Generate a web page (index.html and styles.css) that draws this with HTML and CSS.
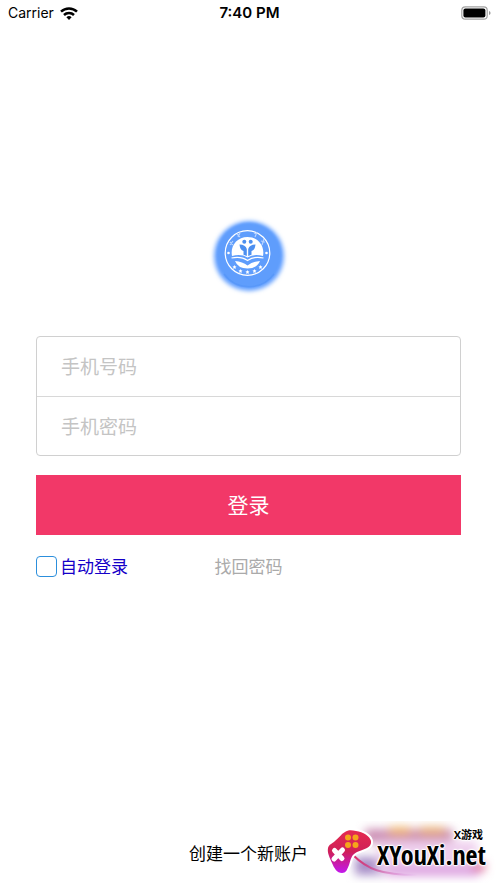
FILE: index.html
```
<!DOCTYPE html>
<html lang="zh-CN">
<head>
    <meta charset="UTF-8">
    <meta name="viewport" content="width=device-width, initial-scale=1.0">
    <title>登录</title>
    <link rel="stylesheet" href="styles.css">
</head>
<body>
    <header class="status-bar">
        <div class="carrier">
            <span>Carrier</span>
            <svg width="18" height="13" viewBox="0 0 18 13" fill="none" stroke="#000" stroke-width="2.5" aria-hidden="true">
                <path d="M1 4.7a11.5 11.5 0 0 1 16 0"/>
                <path d="M4 8a7.2 7.2 0 0 1 10 0"/>
                <path d="M9 13 6.4 10.3a3.8 3.8 0 0 1 5.2 0z" fill="#000" stroke="none"/>
            </svg>
        </div>
        <div class="clock">7:40 PM</div>
        <svg class="battery" width="30" height="14" viewBox="0 0 30 14" aria-hidden="true">
            <rect x="0.8" y="0.8" width="25.4" height="12.4" rx="3.5" fill="none" stroke="#a2a2a2" stroke-width="1.2"/>
            <rect x="2.4" y="2.6" width="22" height="9" rx="2"/>
            <path d="M28 5v4q1.6-.5 1.6-2T28 5z" fill="#999"/>
        </svg>
    </header>

    <main>
        <svg class="logo" width="90" height="90" viewBox="0 0 90 90" role="img" aria-label="logo">
            <defs>
                <filter id="glow" x="-20%" y="-20%" width="140%" height="140%">
                    <feGaussianBlur stdDeviation="2.2"/>
                </filter>
                <filter id="soft" x="-20%" y="-20%" width="140%" height="140%">
                    <feGaussianBlur stdDeviation="1"/>
                </filter>
            </defs>
            <circle cx="45" cy="46" r="35" fill="#68a3ff" filter="url(#glow)"/>
            <circle cx="45" cy="45" r="32" fill="#5f9dfc" filter="url(#soft)"/>
            <path d="M20 64a31 31 0 0 0 50 0" fill="none" stroke="#488cf3" stroke-width="1.5" opacity=".4"/>
            <g transform="translate(-1 0)">
                <circle cx="44.5" cy="43" r="22.3" fill="none" stroke="#fff" stroke-width="1.2"/>
                <path d="M29 46C27 36 34 27 44.500 27S62 36 60 46q-9-2.500-15.500 1.500Q38 43.500 29 46z" fill="#fff"/>
                <path d="M32 51q7.500.500 12.500 4.500Q49.500 51.500 57 51 54 58.500 44.500 58.500T32 51z" fill="#fff"/>
                <path d="M28.500 48q9.500-2.200 16 2.500 6.500-4.700 16-2.500" fill="none" stroke="#fff" stroke-width="1.2"/>
                <g fill="#4c8ff0">
                    <circle cx="41.3" cy="31.8" r="2"/>
                    <circle cx="47.7" cy="31.8" r="2"/>
                    <path d="M36.500 34.500q6 0 7.300 4.500V46l-3.300-1.200V41q-3.500-1-4-6.500z"/>
                    <path d="M52.500 34.500q-6 0-7.300 4.500V46l3.300-1.200V41q3.500-1 4-6.500z"/>
                </g>
                <g fill="none" stroke="#b9d4ff" stroke-width="1.2">
                    <path d="M27 32l3 3m0-4-3 4M34 24l3 3m0-4-2 4M51 23l3 1m0-2-2 5M58 31l4 1m-1-3-2 6"/>
                </g>
                <g fill="#fff">
                    <circle cx="25.5" cy="43" r="1.3"/>
                    <circle cx="63.5" cy="43" r="1.3"/>
                    <path id="star" d="M44.500 60l.6 1.300 1.400.2-1 1 .2 1.500-1.200-.7-1.200.7.2-1.500-1-1 1.400-.2z"/>
                    <use href="#star" x="-7" y="-1"/>
                    <use href="#star" x="7" y="-1"/>
                    <use href="#star" x="-13" y="-5"/>
                    <use href="#star" x="13" y="-5"/>
                </g>
            </g>
        </svg>

        <form class="login-form">
            <div class="fields">
                <input type="tel" id="phone" aria-label="手机号码" placeholder="手机号码">
                <input type="password" id="password" aria-label="手机密码" placeholder="手机密码">
            </div>
            <button type="submit">登录</button>
            <div class="options">
                <label class="remember" for="autoLogin">
                    <input type="checkbox" id="autoLogin">
                    自动登录
                </label>
                <a class="forgot" href="#">找回密码</a>
            </div>
        </form>
    </main>

    <footer>
        <a href="#">创建一个新账户</a>
    </footer>

    <div class="watermark">
        <svg class="gamepad" width="170" height="62" viewBox="0 0 170 62" aria-hidden="true">
            <defs>
                <linearGradient id="pad" x1="0" y1="0" x2="0" y2="1">
                    <stop offset="0" stop-color="#e52b50"/>
                    <stop offset=".5" stop-color="#cf2058"/>
                    <stop offset="1" stop-color="#c218ee"/>
                </linearGradient>
                <linearGradient id="cable">
                    <stop offset="0" stop-color="#d92860"/>
                    <stop offset="1" stop-color="#c565dc" stop-opacity="0"/>
                </linearGradient>
                <filter id="haze" x="-20%" y="-60%" width="140%" height="220%">
                    <feGaussianBlur stdDeviation="5"/>
                </filter>
            </defs>
            <g filter="url(#haze)">
                <rect x="38" y="8" width="88" height="14" fill="#cc8fb4"/>
                <rect x="62" y="6" width="22" height="8" fill="#efb36c"/>
                <rect x="92" y="6" width="26" height="8" fill="#e8ad76"/>
                <rect x="28" y="36" width="30" height="18" fill="#a78fc8"/>
                <rect x="50" y="20" width="100" height="30" fill="#efd0ee"/>
                <rect x="60" y="45" width="92" height="10" fill="#dca0e0"/>
                <rect x="146" y="42" width="12" height="8" fill="#de6a93"/>
            </g>
            <path d="M26 34c14 14 28 20 64 20" fill="none" stroke="url(#cable)" stroke-width="2"/>
            <path d="M18 11c3-2 6-2 11-1 7 1 14 5 15 10 1 7-7 8-14 11-6 3-6 7-8 13-2 5-3 8-7 8-5 0-8-5-10-10C3 37 0 32 1 27c1-4 4-4 7-7 4-3 6-7 10-9z" fill="#fff" stroke="#fff" stroke-width="4"/>
            <path d="M18 11c3-2 6-2 11-1 7 1 14 5 15 10 1 7-7 8-14 11-6 3-6 7-8 13-2 5-3 8-7 8-5 0-8-5-10-10C3 37 0 32 1 27c1-4 4-4 7-7 4-3 6-7 10-9z" fill="url(#pad)"/>
            <g fill="#f5a51b">
                <circle cx="21" cy="16.500" r="3"/>
                <circle cx="28.500" cy="16.500" r="3"/>
                <circle cx="21" cy="24" r="3"/>
                <circle cx="28.500" cy="24" r="3"/>
            </g>
            <path d="M7.500 29.500l7.500 8M15.500 29 7 38" stroke="#fff" stroke-width="5" stroke-linecap="round"/>
        </svg>
        <div class="brand">
            <span class="brand-small">X游戏</span>
            <span class="brand-name">XYouXi.net</span>
        </div>
    </div>
</body>
</html>
```
FILE: styles.css
```
* {
    box-sizing: border-box;
}

body {
    display: flex;
    flex-direction: column;
    min-height: 100vh;
    margin: 0;
    background-color: #fff;
    color: #000;
    font-family: "Noto Sans CJK SC", sans-serif;
    font-size: 17px;
    line-height: 24px;
}

a {
    color: inherit;
    text-decoration: none;
}

.status-bar {
    display: grid;
    grid-template-columns: 1fr auto 1fr;
    align-items: center;
    height: 26px;
    padding: 0 6px 0 8px;
    font-family: Inter, sans-serif;
    font-size: 14px;
}

.carrier {
    display: flex;
    align-items: center;
    gap: 6px;
}

.clock {
    font-size: 15px;
    font-weight: 600;
}

.battery {
    justify-self: end;
}

main {
    flex: 1;
    padding: 184px 36px 0;
}

.logo {
    display: block;
    margin: 0 auto 36px;
}

.fields {
    border: 1px solid #d0d0d0;
    border-radius: 4px;
}

.fields input {
    display: block;
    width: 100%;
    height: 59px;
    padding: 0 24px 2px;
    border: none;
    background: transparent;
    font-family: inherit;
    font-size: 19px;
    outline: none;
}

.fields input + input {
    border-top: 1px solid #d8d8d8;
}

.fields input::placeholder {
    color: #c4c4c4;
}

button {
    display: block;
    width: 100%;
    height: 60px;
    margin-top: 19px;
    padding: 0 0 2px;
    border: none;
    background-color: #f23868;
    color: #fff;
    font-family: inherit;
    font-size: 21px;
    cursor: pointer;
}

.options {
    display: grid;
    grid-template-columns: repeat(3, 1fr);
    align-items: center;
    margin-top: 19px;
}

.remember {
    display: flex;
    align-items: center;
    gap: 3px;
    color: #1500c8;
}

.remember input {
    appearance: none;
    width: 21px;
    height: 21px;
    margin: 0;
    border: 1px solid #2c8fdc;
    border-radius: 4px;
}

.remember input:checked {
    background-color: #2c8fdc;
}

.forgot {
    color: #aaa;
    text-align: center;
}

footer {
    padding-bottom: 18px;
    text-align: center;
}

/* site badge over the bottom right corner */
.watermark {
    position: absolute;
    right: 0;
    bottom: 0;
    width: 170px;
    height: 62px;
    padding: 7px 11px 0 0;
}

.gamepad {
    position: absolute;
    top: 0;
    left: 0;
}

.brand {
    position: relative;
    display: flex;
    flex-direction: column;
    align-items: flex-end;
    font-weight: 700;
    text-shadow: 1px 0 1px #fff, -1px 0 1px #fff, 0 1px 1px #fff, 0 -1px 1px #fff, 0 0 3px #fff;
}

.brand-small {
    margin-right: 3px;
    font-family: "Open Sans", "Noto Sans CJK SC", sans-serif;
    font-size: 11px;
    line-height: 14px;
}

.brand-name {
    font-family: "Open Sans Condensed", "Noto Sans CJK SC", sans-serif;
    font-size: 26px;
    line-height: 26px;
}
```
